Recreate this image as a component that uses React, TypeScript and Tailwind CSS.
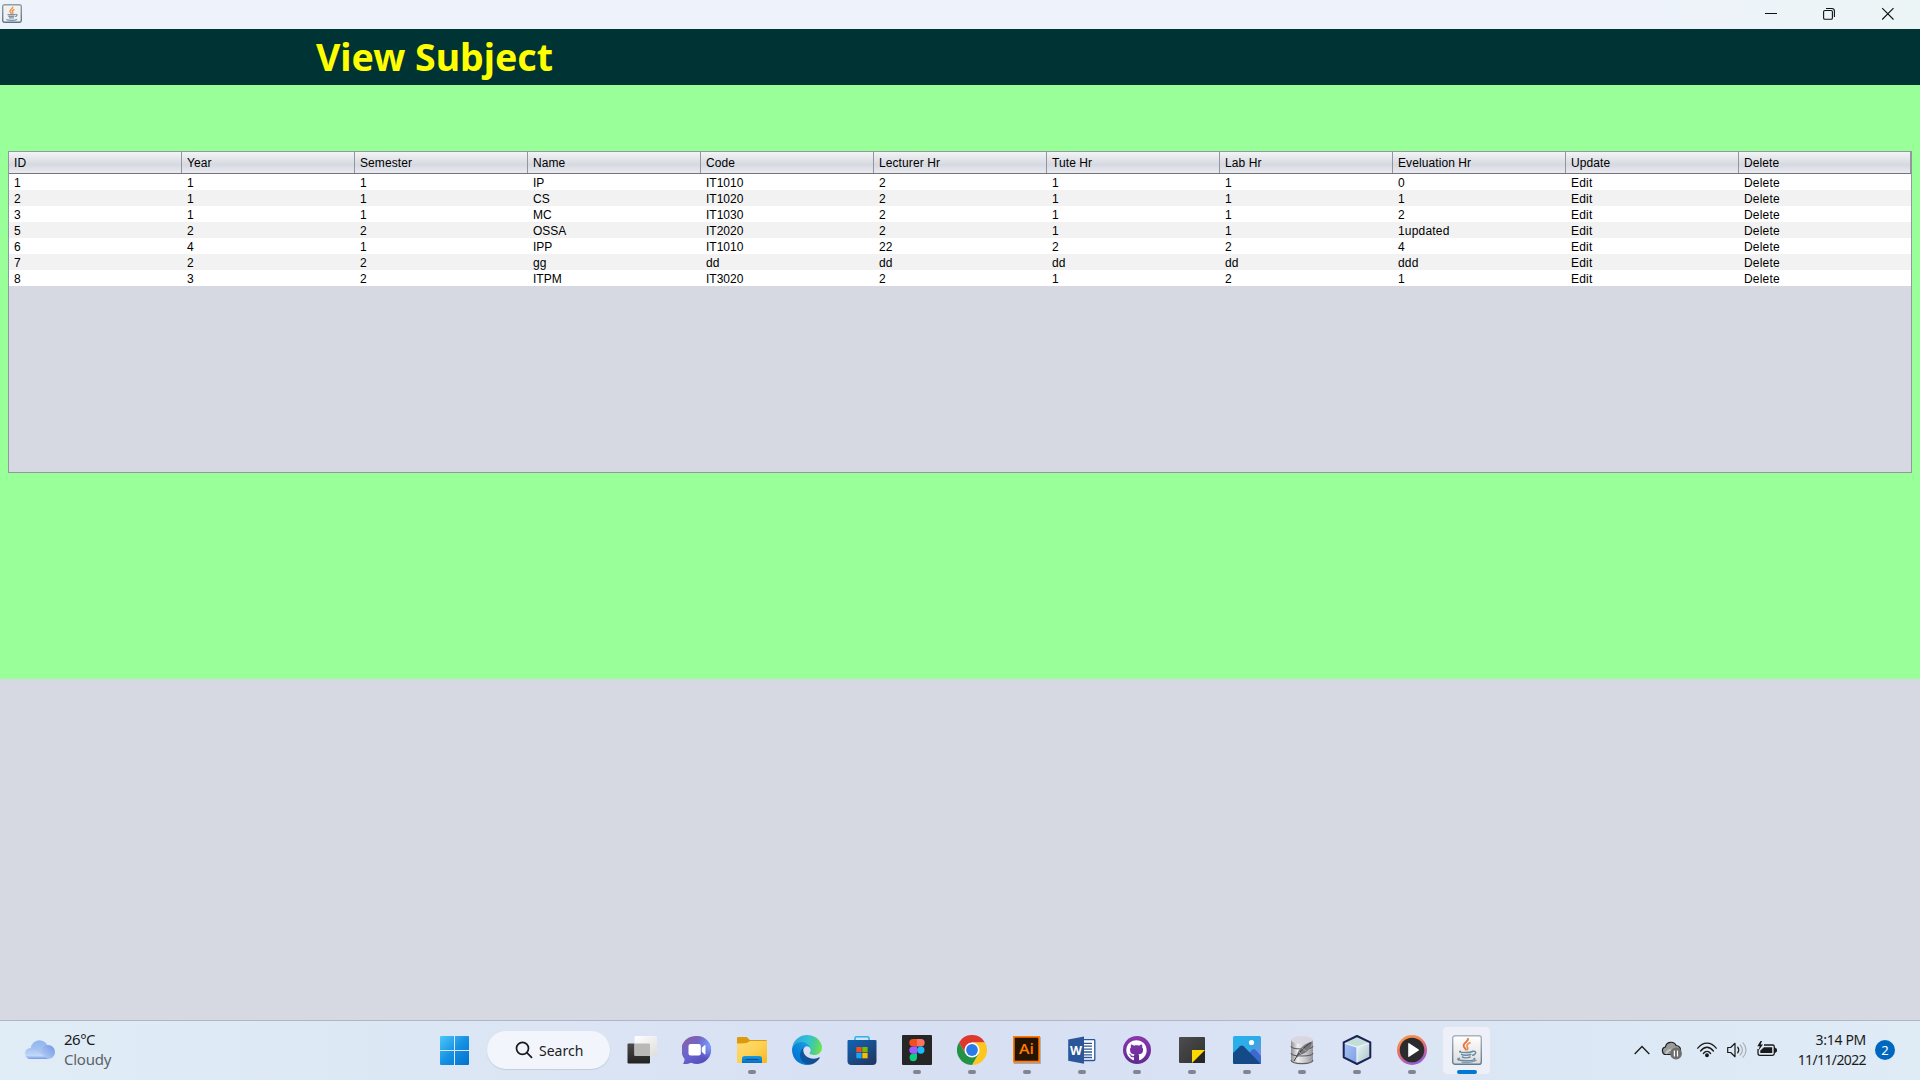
import React from "react";
import { FaGithub } from "react-icons/fa";

const columns = ["ID", "Year", "Semester", "Name", "Code", "Lecturer Hr", "Tute Hr", "Lab Hr", "Eveluation Hr", "Update", "Delete"];

const rows = [
  ["1", "1", "1", "IP", "IT1010", "2", "1", "1", "0", "Edit", "Delete"],
  ["2", "1", "1", "CS", "IT1020", "2", "1", "1", "1", "Edit", "Delete"],
  ["3", "1", "1", "MC", "IT1030", "2", "1", "1", "2", "Edit", "Delete"],
  ["5", "2", "2", "OSSA", "IT2020", "2", "1", "1", "1updated", "Edit", "Delete"],
  ["6", "4", "1", "IPP", "IT1010", "22", "2", "2", "4", "Edit", "Delete"],
  ["7", "2", "2", "gg", "dd", "dd", "dd", "dd", "ddd", "Edit", "Delete"],
  ["8", "3", "2", "ITPM", "IT3020", "2", "1", "2", "1", "Edit", "Delete"],
];

function JavaIcon({ size, id }: { size: number; id: string }) {
  return (
    <svg width={size} height={size} viewBox="0 0 30 30" className="block">
      <defs>
        <linearGradient id={id} x1="0" y1="0" x2="0" y2="1">
          <stop offset="0" stopColor="#ffffff" />
          <stop offset="1" stopColor="#dcdcdc" />
        </linearGradient>
        <linearGradient id={id + "b"} x1="0" y1="0" x2="0" y2="1">
          <stop offset="0" stopColor="#a9b5bd" />
          <stop offset="1" stopColor="#5f7c90" />
        </linearGradient>
      </defs>
      <rect x="0.7" y="0.7" width="28.6" height="28.6" rx="2.4" fill={`url(#${id})`} stroke={`url(#${id}b)`} strokeWidth="1.4" />
      <path d="M15.8 3.2c1.6 3.2-4.6 4.6-4.2 7.6.2 1.8 2.2 2.800 2.600 4.600" fill="none" stroke="#e8743b" strokeWidth="1.900" />
      <path d="M18.600 7.600c-3 1.200-4.400 2.600-3.400 4.200.8 1.200.9 2.200-.4 3.500" fill="none" stroke="#ee8a45" strokeWidth="1.600" />
      <g fill="none" stroke="#6a8ba4" strokeWidth="1.500" strokeLinecap="round">
        <path d="M8.300 16.200c-1.500.7-.6 1.300 5.200 1.300 3.300 0 5.300-.3 6.700-.8" />
        <path d="M9.600 19.400c1.200 1.200 6.800 1.100 9.200.1M10.300 22c1.800.9 5.800.9 7.800 0" />
        <path d="M20.300 16.300c4.500-1 4.200 2.700.4 4" />
        <path d="M7.300 23.300c-4 1.300.3 2.500 7.500 2.500 6 0 9.500-1 7.300-2.300" />
        <path d="M10 27.200c5 .6 11 .2 14.300-1.800" strokeWidth="1" />
      </g>
    </svg>
  );
}

function TaskViewIcon() {
  return (
    <svg width="30" height="30" viewBox="0 0 30 30">
      <defs>
        <linearGradient id="tvd" x1="0" y1="0" x2="0" y2="1"><stop offset="0" stopColor="#4a4a48" /><stop offset="1" stopColor="#222221" /></linearGradient>
        <linearGradient id="tvl" x1="0" y1="0" x2="1" y2="1"><stop offset="0" stopColor="#ffffff" /><stop offset="1" stopColor="#dedede" /></linearGradient>
      </defs>
      <rect x="0.500" y="8.500" width="22.500" height="20" rx="1" fill="url(#tvd)" />
      <rect x="7.500" y="1" width="22.500" height="20" rx="1" fill="url(#tvl)" />
      <path d="M7.500 8.500h14.500q1 0 1 1v11.500h-14.500q-1 0-1-1z" fill="#b9b9b8" />
    </svg>
  );
}

function ChatIcon() {
  return (
    <svg width="30" height="30" viewBox="0 0 30 30">
      <defs>
        <linearGradient id="cht" x1="0.100" y1="0" x2="0.800" y2="1"><stop offset="0" stopColor="#92599f" /><stop offset=".35" stopColor="#7267c4" /><stop offset=".6" stopColor="#6561d0" /><stop offset="1" stopColor="#5148b4" /></linearGradient>
        <radialGradient id="chr" cx="1" cy=".35" r=".5"><stop offset="0" stopColor="#7fa2ff" /><stop offset="1" stopColor="#7fa2ff" stopOpacity="0" /></radialGradient>
      </defs>
      <path d="M15 1a14 14 0 1 1-5.800 26.700c-2.500 1.200-5.500 1.500-8.200 1.200 1-1.800 1.500-3.300 1.600-5A14 14 0 0 1 15 1z" fill="url(#cht)" />
      <path d="M15 1a14 14 0 1 1-5.800 26.700A14 14 0 0 1 15 1z" fill="url(#chr)" />
      <rect x="6.500" y="9" width="12.300" height="11.600" rx="2" fill="#fff" />
      <path d="M19.800 12.800l2.700-2.500q1-.7 1 .5v8q0 1.200-1 .5l-2.700-2.500z" fill="#fff" />
    </svg>
  );
}

function FolderIcon() {
  return (
    <svg width="30" height="30" viewBox="0 0 30 30">
      <defs>
        <linearGradient id="fld" x1="0" y1="0" x2="1" y2="1"><stop offset="0" stopColor="#ffdc74" /><stop offset=".5" stopColor="#fdd155" /><stop offset="1" stopColor="#f8b816" /></linearGradient>
        <linearGradient id="flb" x1="0" y1="0" x2="0" y2="1"><stop offset="0" stopColor="#1a9ae4" /><stop offset="1" stopColor="#0b6fbd" /></linearGradient>
      </defs>
      <path d="M0 3.300q0-1.300 1.300-1.300h8.500l3 3h16q1.200 0 1.200 1.200V12H0z" fill="#dd9a0b" />
      <path d="M0 8.500q6 .2 9.800-.4L13 6h16q1 0 1 1v19.800q0 1.200-1.200 1.200H1.200Q0 28 0 26.800z" fill="url(#fld)" />
      <path d="M5 28v-4.500q0-2.500 2.500-2.500h15q2.500 0 2.500 2.500V28z" fill="url(#flb)" />
      <path d="M8.500 24.500h13" stroke="#07538f" strokeWidth="1.100" />
    </svg>
  );
}

function EdgeIcon() {
  return (
    <svg width="30" height="30" viewBox="0 0 256 256">
      <defs>
        <linearGradient id="e1" x1="63" y1="178" x2="241" y2="178" gradientUnits="userSpaceOnUse"><stop stopColor="#0c59a4" /><stop offset="1" stopColor="#114a8b" /></linearGradient>
        <linearGradient id="e2" x1="157" y1="100" x2="46" y2="222" gradientUnits="userSpaceOnUse"><stop stopColor="#1b9de2" /><stop offset=".16" stopColor="#1595df" /><stop offset=".67" stopColor="#0680d7" /><stop offset="1" stopColor="#0078d4" /></linearGradient>
        <linearGradient id="e3" x1="25" y1="50" x2="250" y2="110" gradientUnits="userSpaceOnUse"><stop stopColor="#31a8df" /><stop offset=".45" stopColor="#2fc3d3" /><stop offset=".75" stopColor="#4bcf8c" /><stop offset="1" stopColor="#70e34d" /></linearGradient>
      </defs>
      <path fill="url(#e1)" d="M231 190.500c-3.400 1.800-6.900 3.400-10.500 4.700a101.800 101.800 0 0 1-35.900 6.400c-47.300 0-88.500-32.500-88.500-74.300a31.500 31.500 0 0 1 16.400-27.300c-42.800 1.800-53.800 46.400-53.800 72.500 0 73.900 68.100 81.400 82.800 81.400 7.900 0 19.800-2.300 27-4.600l1.300-.4a128.300 128.300 0 0 0 66.600-52.800 4 4 0 0 0-5.400-5.600z" />
      <path fill="url(#e2)" d="M105.700 241.400a79.200 79.200 0 0 1-22.700-21.300 80.700 80.700 0 0 1 29.500-120c3.200-1.500 8.500-4.100 15.600-4a32.400 32.400 0 0 1 25.700 13 31.900 31.900 0 0 1 6.300 18.700c0-.2 24.500-79.600-80-79.600-43.900 0-80 41.700-80 78.200a130.200 130.200 0 0 0 12.100 56 128 128 0 0 0 156.400 67 75.500 75.500 0 0 1-62.800-8z" />
      <path fill="url(#e3)" d="M152.300 148.900c-.9 1-3.400 2.500-3.400 5.600 0 2.600 1.700 5.200 4.800 7.300 14.300 10 41.400 8.600 41.500 8.600a59.600 59.600 0 0 0 30.300-8.300 61.400 61.400 0 0 0 30.400-52.900c.3-22.400-8-37.300-11.300-43.900C223.500 23.900 177.700 0 128 0A128 128 0 0 0 0 126.200c.5-36.500 36.800-66 80-66 3.500 0 23.500.3 42 10a72.600 72.600 0 0 1 30.900 29.300c6.100 10.600 7.200 24.100 7.200 29.500s-2.700 13.300-7.800 19.900z" />
    </svg>
  );
}

function StoreIcon() {
  return (
    <svg width="30" height="30" viewBox="0 0 30 30">
      <defs><linearGradient id="sto" x1="0" y1="0" x2=".8" y2="1"><stop stopColor="#0f65b4" /><stop offset="1" stopColor="#213863" /></linearGradient></defs>
      <path d="M8 6V3.300Q8 1.800 9.500 1.800h11Q22 1.800 22 3.300V6" fill="none" stroke="#28b4f2" strokeWidth="1.600" />
      <path d="M.5 6q0-1 1-1h27q1 0 1 1v20q0 4-4 4h-21q-4 0-4-4z" fill="url(#sto)" />
      <rect x="9.300" y="12" width="5.300" height="5.300" fill="#f25022" /><rect x="15.300" y="12" width="5.300" height="5.300" fill="#7fba00" />
      <rect x="9.300" y="18" width="5.300" height="5.300" fill="#1ba5ef" /><rect x="15.300" y="18" width="5.300" height="5.300" fill="#ffb901" />
    </svg>
  );
}

function FigmaIcon() {
  return (
    <svg width="30" height="30" viewBox="0 0 30 30">
      <rect width="30" height="30" rx="1" fill="#262626" />
      <path d="M15 4h-4a3.700 3.700 0 0 0 0 7.400h4z" fill="#f24e1e" />
      <path d="M15 4h4a3.700 3.700 0 0 1 0 7.400h-4z" fill="#ff7262" />
      <path d="M15 11.400h-4a3.700 3.700 0 0 0 0 7.400h4z" fill="#a259ff" />
      <circle cx="18.800" cy="15.100" r="3.700" fill="#1abcfe" />
      <path d="M15 18.800h-4a3.700 3.700 0 1 0 4 3.700z" fill="#0acf83" />
    </svg>
  );
}

function ChromeIcon() {
  return (
    <svg width="30" height="30" viewBox="0 0 30 30">
      <path d="M2 7.500A15 15 0 0 1 28 7.500H15L8.500 18.700z" fill="#e0372c" />
      <path d="M28 7.500A15 15 0 0 1 15 30l6.500-11.200L15 7.500z" fill="#fdc71f" />
      <path d="M15 30A15 15 0 0 1 2 7.500l6.500 11.200h13z" fill="#229247" />
      <circle cx="15" cy="15" r="7.500" fill="#fff" />
      <circle cx="15" cy="15" r="5.900" fill="#2a7bea" />
    </svg>
  );
}

function AiIcon() {
  return (
    <svg width="30" height="30" viewBox="0 0 30 30">
      <rect x="1.800" y="2" width="27" height="27" fill="#8b7f85" opacity=".6" />
      <rect x="1" y="1" width="27" height="26.500" fill="#ff7c00" />
      <rect x="2.700" y="2.700" width="23.600" height="23" fill="#261300" />
      <text x="14.500" y="19.300" textAnchor="middle" fontFamily="Open Sans, sans-serif" fontWeight="600" fontSize="15" fill="#ff7c00" textLength="15" lengthAdjust="spacingAndGlyphs">Ai</text>
    </svg>
  );
}

function WordIcon() {
  return (
    <svg width="30" height="30" viewBox="0 0 30 30">
      <rect x="14" y="4.700" width="13.800" height="20.800" rx=".8" fill="#fff" stroke="#2b579a" strokeWidth="1.300" />
      <path d="M15 8.300h10M15 11.200h10M15 14.100h10M15 17h10M15 19.900h10M15 22.500h10" stroke="#2b579a" strokeWidth="1.300" />
      <path d="M1.200 4.500L17 1.500v27.200L1.200 25.700z" fill="#2b579a" />
      <text x="9" y="20" textAnchor="middle" fontFamily="Open Sans, sans-serif" fontWeight="700" fontSize="13" fill="#fff" textLength="12" lengthAdjust="spacingAndGlyphs">W</text>
    </svg>
  );
}

function GithubIcon() {
  return (
    <span className="grid h-[28px] w-[28px] place-items-center rounded-full bg-linear-to-b from-[#8d35b0] to-[#5f2b91]">
      <FaGithub size={21} color="#ffffff" />
    </span>
  );
}

function NotesIcon() {
  return (
    <svg width="30" height="30" viewBox="0 0 30 30">
      <defs><linearGradient id="stk" x1="0" y1="0" x2="1" y2="1"><stop stopColor="#4d4d4d" /><stop offset="1" stopColor="#303030" /></linearGradient></defs>
      <rect x="2" y="2" width="26" height="26" rx="1" fill="url(#stk)" />
      <path d="M15 28L28 15v12q0 1-1 1z" fill="#262626" />
      <path d="M15 15h13L15 28z" fill="#ffd800" />
    </svg>
  );
}

function PhotosIcon() {
  return (
    <svg width="30" height="30" viewBox="0 0 30 30">
      <defs>
        <linearGradient id="ph1" x1="0" y1="0" x2="1" y2="1"><stop stopColor="#28b1ee" /><stop offset=".5" stopColor="#2faae6" /><stop offset="1" stopColor="#a07fe0" /></linearGradient>
        <clipPath id="phc"><rect x="1" y="1" width="28" height="28" rx="1.500" /></clipPath>
      </defs>
      <g clipPath="url(#phc)">
        <rect x="1" y="1" width="28" height="28" fill="url(#ph1)" />
        <path d="M17 18l3.500-3.500q1.500-1 3 .3L30 22v8H20z" fill="#3c6bd0" />
        <path d="M0 19l8-7.800q1.800-1.400 3.600 0L29 29H0z" fill="#154a88" />
        <circle cx="19.500" cy="7.500" r="2.600" fill="#fff" />
      </g>
    </svg>
  );
}

function DatabaseIcon() {
  return (
    <svg width="30" height="30" viewBox="0 0 30 30">
      <defs><linearGradient id="dbg" x1="0" y1="0" x2="1" y2="0"><stop stopColor="#8f8f92" /><stop offset=".3" stopColor="#eeeef1" /><stop offset=".65" stopColor="#c9c9cd" /><stop offset="1" stopColor="#949498" /></linearGradient></defs>
      <path d="M4 5v20c0 5.200 22 5.200 22 0V5z" fill="url(#dbg)" />
      <ellipse cx="15" cy="5" rx="11" ry="4" fill="#d9d6df" />
      <path d="M4 11c0 4 22 4 22 0M4 18c0 4 22 4 22 0M4 25c0 4.800 22 4.800 22 0" fill="none" stroke="#606065" strokeWidth="1.100" />
      <path d="M9.500 23c0-7 6-13.500 15.500-16.500C25 12 20 18.500 12 20.500z" fill="#77777c" />
      <path d="M7 26c4-8 10-14 17-18.500" fill="none" stroke="#3c3c41" strokeWidth="1" />
      <path d="M12 17l2.500 2.500M15 13l4 3" stroke="#b7b7bb" strokeWidth=".7" />
    </svg>
  );
}

function CubeIcon() {
  return (
    <svg width="30" height="30" viewBox="0 0 30 30">
      <defs>
        <linearGradient id="cb1" x1="0" y1="0" x2="1" y2="1"><stop stopColor="#a9c4f4" /><stop offset="1" stopColor="#7ea0e2" /></linearGradient>
        <linearGradient id="cb2" x1="0" y1="0" x2="1" y2="1"><stop stopColor="#edf7f7" /><stop offset="1" stopColor="#a4bfc4" /></linearGradient>
      </defs>
      <path d="M1.500 7.500L15 12v17L1.500 22.200z" fill="url(#cb1)" />
      <path d="M28.500 7.500L15 12v17l13.500-6.800z" fill="url(#cb2)" />
      <path d="M15 1L1.500 7.500 15 12l13.500-4.500z" fill="#c3ded8" />
      <path d="M2 8l13 4L28 8M15 12V28" fill="none" stroke="#e9f4ff" strokeWidth="1.200" />
      <path d="M15 1L28.300 7.300v15L15 29 1.700 22.300v-15z" fill="none" stroke="#1d2055" strokeWidth="2" strokeLinejoin="round" />
    </svg>
  );
}

function PlayerIcon() {
  return (
    <svg width="30" height="30" viewBox="0 0 30 30">
      <defs><linearGradient id="mp" x1=".2" y1="0" x2=".6" y2="1"><stop stopColor="#ff9a3d" /><stop offset=".4" stopColor="#f07660" /><stop offset=".75" stopColor="#bd62a8" /><stop offset="1" stopColor="#8f5cd6" /></linearGradient></defs>
      <circle cx="15" cy="15" r="15" fill="url(#mp)" />
      <circle cx="15" cy="15" r="12.300" fill="#2c2c2e" />
      <path d="M11.200 8.800q0-1.200 1-.6l9.500 6.200q.8.600 0 1.200l-9.500 6.200q-1 .6-1-.6z" fill="#fff" />
    </svg>
  );
}

const apps: { icon: React.ReactNode; state: "idle" | "running" | "active" }[] = [
  { icon: <TaskViewIcon />, state: "idle" },
  { icon: <ChatIcon />, state: "idle" },
  { icon: <FolderIcon />, state: "running" },
  { icon: <EdgeIcon />, state: "idle" },
  { icon: <StoreIcon />, state: "idle" },
  { icon: <FigmaIcon />, state: "running" },
  { icon: <ChromeIcon />, state: "running" },
  { icon: <AiIcon />, state: "running" },
  { icon: <WordIcon />, state: "running" },
  { icon: <GithubIcon />, state: "running" },
  { icon: <NotesIcon />, state: "running" },
  { icon: <PhotosIcon />, state: "running" },
  { icon: <DatabaseIcon />, state: "running" },
  { icon: <CubeIcon />, state: "running" },
  { icon: <PlayerIcon />, state: "running" },
  { icon: <JavaIcon size={30} id="jbig" />, state: "active" },
];

function AppButton({ icon, state }: { icon: React.ReactNode; state: string }) {
  return (
    <div className="flex h-full w-[55px] justify-center pt-[5px]">
      <div className={state === "active" ? "flex h-[49px] w-[49px] flex-col items-center rounded-[5px] border border-[#e2e5f1] bg-[#edf0f9] pt-2" : "flex h-[49px] w-[49px] flex-col items-center pt-[9px]"}>
        <div className="grid h-[30px] w-[30px] place-items-center">{icon}</div>
        {state === "running" && <div className="mt-[5px] h-1 w-2 rounded-full bg-[#80858f]" />}
        {state === "active" && <div className="mt-[5px] h-1 w-5 shrink-0 rounded-full bg-[#0078d4]" />}
      </div>
    </div>
  );
}

function TitleBar() {
  return (
    <div className="flex h-[29px] items-start justify-between bg-linear-to-r from-[#eef3fb] from-85% to-[#ecf5f6] pt-1 pl-[2px] pr-[26px]">
      <svg width="20" height="19" viewBox="0 0 20 19">
        <defs><linearGradient id="tib" x1="0" y1="0" x2="0" y2="1"><stop stopColor="#8ea0ab" /><stop offset="1" stopColor="#5b7689" /></linearGradient></defs>
        <rect x=".7" y=".7" width="18.600" height="17.600" rx="1.800" fill="#f1f1f0" stroke="url(#tib)" strokeWidth="1.400" />
        <path d="M10.600 2.800c.8 2-3 2.700-2.600 4.700.2 1 1.300 1.500 1.500 2.300M12.500 5.500c-1.900.7-2.700 1.500-1.800 2.700.4.700.2 1.200-.2 1.700" fill="none" stroke="#ec9350" strokeWidth="1.500" />
        <path d="M5.500 10.600h7.500M6.300 12.300h6M7 13.800h4.800M13.200 10.500c2.600-.4 2.300 1.600 0 2.100M4.300 15.500c2.200 1.200 8.600 1.200 10.900 0" fill="none" stroke="#7893aa" strokeWidth="1.200" />
      </svg>
      <div className="flex items-center gap-[46px] pt-[3px]">
        <svg width="12" height="13" viewBox="0 0 12 13"><path d="M0 6.500h12" stroke="#111" /></svg>
        <svg width="12" height="13" viewBox="0 0 12 13" fill="none" stroke="#111">
          <rect x=".6" y="3.500" width="8.800" height="8.800" rx="1.300" strokeWidth="1.100" />
          <path d="M3 1.500h5.800q2.600 0 2.600 2.600V10" strokeWidth="1.100" />
        </svg>
        <svg width="13" height="13" viewBox="0 0 13 13"><path d="M1.200 1.200l11.300 11.300M12.500 1.200L1.200 12.500" stroke="#111" strokeWidth="1.100" /></svg>
      </div>
    </div>
  );
}

function SubjectTable() {
  return (
    <div className="mx-2 h-[322px] border border-[#9297a1] bg-[#d6d9e1] font-['Liberation_Sans',sans-serif] text-xs text-black">
      <div className="flex h-[22px] border-b border-[#75737f] bg-linear-to-b from-[#f3f4f7] via-[#d6d9e0] via-60% to-[#e9ebf0] tracking-[0.09px]">
        {columns.map((c) => (
          <div key={c} className="w-[173px] shrink-0 border-r border-[#93969e] pl-[5px] leading-[22px] last:w-[172px]">{c}</div>
        ))}
      </div>
      {rows.map((r, i) => (
        <div key={i} className="flex h-4 pt-px odd:bg-[#f2f2f2] even:bg-white">
          {r.map((v, j) => (
            <div key={j} className={/[a-z]{3}/.test(v) ? "w-[173px] shrink-0 pl-[5px] leading-4 tracking-[0.18px] last:w-[172px]" : "w-[173px] shrink-0 pl-[5px] leading-4 last:w-[172px]"}>{v}</div>
          ))}
        </div>
      ))}
    </div>
  );
}

function Tray() {
  return (
    <div className="ml-auto flex h-full items-center pr-[25px] pb-px">
      <svg className="mr-[11px]" width="16" height="10" viewBox="0 0 16 10"><path d="M.7 9L8 1.500 15.300 9" fill="none" stroke="#1a1a1a" strokeWidth="1.300" /></svg>
      <svg className="mr-[15px]" width="21" height="20" viewBox="0 0 21 20">
        <path d="M5 14.500C1 14.500-.3 8 4.500 7 5 1.500 13 .5 15 5.500c4 0 5.500 4 4 7l-3 2z" fill="#9a9a9a" stroke="#1d1d1d" strokeWidth="1.200" />
        <path d="M5 14c1-4 5-5 9-4" fill="none" stroke="#c6c6c6" strokeWidth="2" />
        <circle cx="15" cy="13.500" r="5.900" fill="#6f6f6f" />
        <path d="M13.400 10.500v6M16.500 10.500v6" stroke="#fff" strokeWidth="1.200" />
      </svg>
      <svg className="mr-[10px]" width="20" height="16" viewBox="0 0 20 16" fill="none" stroke="#1a1a1a" strokeWidth="1.300" strokeLinecap="round">
        <path d="M.8 6.200C6-.5 14-.5 19.200 6.200M3.600 9C7.500 4 12.500 4 16.400 9M6.400 11.500c2-2.800 5.200-2.800 7.200 0" />
        <circle cx="10" cy="13.300" r="1.300" fill="#1a1a1a" />
      </svg>
      <svg className="mr-[10px]" width="20" height="18" viewBox="0 0 20 18" fill="none" stroke="#1a1a1a" strokeWidth="1.200" strokeLinecap="round" strokeLinejoin="round">
        <path d="M.7 6.500h3L8 2.300v13.400l-4.300-4.200h-3z" />
        <path d="M10.700 6.200c1.300 1.700 1.300 3.900 0 5.600" />
        <path d="M13.200 4c2.600 3 2.600 7 0 10M16 1.800c4 4.200 4 10.200 0 14.400" stroke="#a9b0b7" />
      </svg>
      <svg className="mb-[3px]" width="20" height="16" viewBox="0 0 20 16">
        <path d="M7 4h8.500q1.800 0 1.800 1.800v6.700q0 1.800-1.800 1.800H2.800Q1 14.300 1 12.500V8" fill="none" stroke="#1a1a1a" strokeWidth="1.300" />
        <path d="M7 6.300h8.200v5.800H3.300V9.500z" fill="#1a1a1a" />
        <path d="M18 7v4.500q2-.5 2-2.200T18 7z" fill="#1a1a1a" stroke="#1a1a1a" strokeWidth=".6" />
        <path d="M3.500 0L.3 5.300h2.400L1.500 9.500 6 3.600H3.600L5 0z" fill="#1a1a1a" />
      </svg>
      <div className="ml-[20px] flex w-[69px] flex-col items-end whitespace-nowrap pb-px text-[14px] leading-5 text-[#1b1b1b]">
        <div className="tracking-[-0.3px]">3:14 PM</div>
        <div className="tracking-[-0.62px]">11/11/2022</div>
      </div>
      <div className="ml-[9px] grid h-5 w-5 place-items-center rounded-full bg-[#0067c0] text-[13px] leading-none text-white">2</div>
    </div>
  );
}

function Taskbar() {
  return (
    <div className="flex h-[60px] items-center border-t border-[#b1b6c2] bg-linear-to-r from-[#e0edf6] via-[#d7dff3] to-[#dfecf6] font-['Noto_Sans',sans-serif]">
      <div className="flex h-full w-[440px] items-center pl-[25px]">
        <svg className="mt-[-3px]" width="30" height="19" viewBox="0 0 30 19">
          <defs>
            <linearGradient id="wc1" x1="0" y1="0" x2="0" y2="1"><stop stopColor="#8fb4ee" /><stop offset="1" stopColor="#b7cff5" /></linearGradient>
            <linearGradient id="wc2" x1="0" y1="0" x2="0" y2="1"><stop stopColor="#9fbff2" /><stop offset=".7" stopColor="#c3d8f8" /><stop offset="1" stopColor="#6f98e6" /></linearGradient>
            <linearGradient id="wc3" x1="1" y1="0" x2="0" y2="1"><stop stopColor="#6d97e4" /><stop offset="1" stopColor="#bdd2f7" /></linearGradient>
          </defs>
          <circle cx="14.500" cy="9" r="8.800" fill="url(#wc1)" />
          <circle cx="23" cy="12" r="7" fill="url(#wc3)" />
          <path d="M5.500 8C8 7.500 10.500 8.500 12 10.500l11 8.500H5.500a5.500 5.500 0 0 1 0-11z" fill="url(#wc2)" />
        </svg>
        <div className="ml-[9px] pb-1 text-[15px] leading-5">
          <div className="tracking-[-0.5px] text-[#1b1b1b]">26°C</div>
          <div className="tracking-[-0.25px] text-[#5d6268]">Cloudy</div>
        </div>
      </div>
      <svg width="29" height="29" viewBox="0 0 29 29">
        <defs><linearGradient id="win" x1="0" y1="0" x2="29" y2="29" gradientUnits="userSpaceOnUse"><stop stopColor="#4cc8fb" /><stop offset=".5" stopColor="#1691e2" /><stop offset="1" stopColor="#0070cf" /></linearGradient></defs>
        <path d="M1 0h13v14H0V1q0-1 1-1zM15 0h13q1 0 1 1v13H15zM0 15h14v14H1q-1 0-1-1zM15 15h14v13q0 1-1 1H15z" fill="url(#win)" />
      </svg>
      <div className="mb-px ml-[18px] flex h-[38px] w-[123px] items-center rounded-full bg-[#f2f5fc] pl-[28px] shadow-[0_1px_1px_rgba(120,130,160,0.25)]">
        <svg width="18" height="18" viewBox="0 0 18 18" fill="none" stroke="#1a1a1a" strokeWidth="1.700"><circle cx="7.500" cy="7.300" r="6" /><path d="M11.800 11.600l5.200 5.200" /></svg>
        <span className="ml-[6px] text-[14px] text-[#1b1b1b]">Search</span>
      </div>
      <div className="ml-1 flex h-full">
        {apps.map((a, i) => <AppButton key={i} icon={a.icon} state={a.state} />)}
      </div>
      <Tray />
    </div>
  );
}

export default function App() {
  return (
    <div className="flex h-[1080px] w-[1920px] flex-col overflow-hidden bg-[#d6d9e1]">
      <TitleBar />
      <header className="flex h-14 items-center bg-[#003333] pl-[316px]">
        <h1 className="font-['Noto_Sans',sans-serif] text-[37.5px] leading-none font-bold text-[#ffff00]">View Subject</h1>
      </header>
      <main className="h-[594px] bg-[#99ff99] pt-[66px]">
        <SubjectTable />
      </main>
      <div className="flex-1" />
      <Taskbar />
    </div>
  );
}
